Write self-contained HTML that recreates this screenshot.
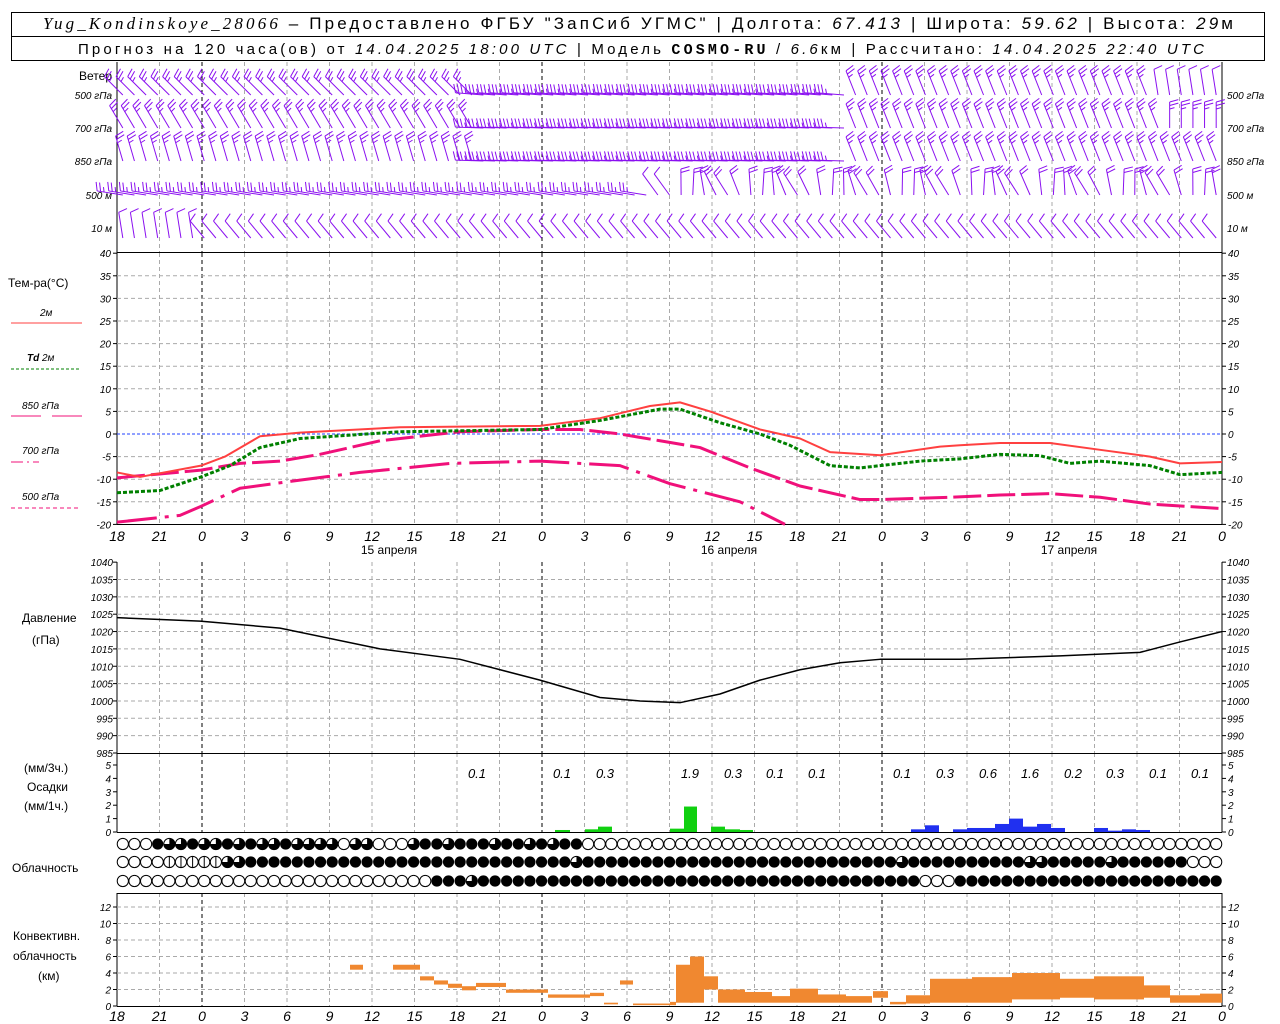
<!DOCTYPE html>
<html><head><meta charset="utf-8"><style>
html,body{margin:0;padding:0;background:#fff;width:1280px;height:1024px;overflow:hidden}
svg{display:block}
text{font-family:"Liberation Sans",sans-serif}
.t{font-size:10px;font-style:italic}
.b{font-size:14px;font-style:italic}
.p{font-size:13px;font-style:italic}
.l{font-size:12px}
</style></head><body>
<svg id="s" width="1280" height="1024" xmlns="http://www.w3.org/2000/svg">
<rect x="11.5" y="12.5" width="1253" height="48" fill="none" stroke="#000"/>
<line x1="11" y1="36.5" x2="1265" y2="36.5" stroke="#000"/>
<text x="638" y="29" font-size="17" text-anchor="middle" textLength="1190"><tspan font-family="Liberation Serif" font-style="italic">Yug_Kondinskoye_28066</tspan> – Предоставлено ФГБУ "ЗапСиб УГМС" | Долгота: <tspan font-style="italic">67.413</tspan> | Широта: <tspan font-style="italic">59.62</tspan> | Высота: <tspan font-style="italic">29</tspan>м</text>
<text x="641" y="54" font-size="15" text-anchor="middle" textLength="1126">Прогноз на 120 часа(ов) от <tspan font-style="italic">14.04.2025 18:00 UTC</tspan> | Модель <tspan font-family="Liberation Mono" font-weight="bold">COSMO-RU</tspan> / <tspan font-style="italic">6.6</tspan>км | Рассчитано: <tspan font-style="italic">14.04.2025 22:40 UTC</tspan></text>
<g id="g"></g>
</svg>
<script>
var g=document.getElementById('g'),h='';
function L(x1,y1,x2,y2,c,w,d){h+='<line x1="'+x1+'" y1="'+y1+'" x2="'+x2+'" y2="'+y2+'" stroke="'+(c||'#000')+'" stroke-width="'+(w||1)+'"'+(d?' stroke-dasharray="'+d+'"':'')+'/>';}
function T(x,y,s,cl,a){h+='<text x="'+x+'" y="'+y+'" class="'+(cl||'l')+'"'+(a?' text-anchor="'+a+'"':'')+'>'+s+'</text>';}
var X0=117,X1=1222,dx=(X1-X0)/26;
function vgrid(y1,y2){for(var i=0;i<=26;i++){var x=X0+i*dx;var day=(i%8==2);if(i==0||i==26)continue;L(x,y1,x,y2,day?'#000':'#aaa',1,'4,3');}}
vgrid(62,252);vgrid(253,524);vgrid(562,753);vgrid(753,832);vgrid(893,1006);
L(X0,62,X0,524);L(X1,62,X1,524);L(X0,252.5,X1,252.5);L(X0,524.5,X1,524.5);
L(X0,562,X0,832);L(X1,562,X1,832);L(X0,753.5,X1,753.5);L(X0,832.5,X1,832.5);
L(X0,893,X0,1006);L(X1,893,X1,1006);L(X0,893.5,X1,893.5);L(X0,1006.5,X1,1006.5);
function ty(t){return 434-t*4.52;}
for(var t=-20;t<=40;t+=5){var y=ty(t);if(t>-20&&t<40)L(X0,y,X1,y,t==0?'#2040ff':'#aaa',1,t==0?'3,2':'4,3');L(X0-4,y,X0,y);L(X1,y,X1+4,y);T(X0-6,y+4,t,'t','end');T(X1+6,y+4,t,'t');}
function py(p){return 753-(p-985)*3.47;}
for(var p=985;p<=1040;p+=5){var y=py(p);if(p>985&&p<1040)L(X0,y,X1,y,'#aaa',1,'4,3');L(X0-4,y,X0,y);L(X1,y,X1+4,y);T(X0-4,y+4,p,'t','end');T(X1+5,y+4,p,'t');}
function ry(v){return 832-v*13.4;}
for(var v=0;v<=5;v++){var y=ry(v);L(X0-4,y,X0,y);L(X1,y,X1+4,y);T(X0-6,y+4,v,'t','end');T(X1+6,y+4,v,'t');}
function cy(v){return 1006-v*8.25;}
for(var v=0;v<=12;v+=2){var y=cy(v);if(v>0)L(X0,y,X1,y,'#aaa',1,'4,3');L(X0-4,y,X0,y);L(X1,y,X1+4,y);T(X0-6,y+4,v,'t','end');T(X1+6,y+4,v,'t');}
for(var i=0;i<=26;i++){var x=X0+i*dx;var s=[18,21,0,3,6,9,12,15][i%8];T(x,541,s,'b','middle');T(x,1021,s,'b','middle');}
T(389,554,'15 апреля','l','middle');T(729,554,'16 апреля','l','middle');T(1069,554,'17 апреля','l','middle');
T(112,80,'Ветер','l','end');
var lv=[['500 гПа',95],['700 гПа',128],['850 гПа',161],['500 м',195],['10  м',228]];
lv.forEach(function(a){T(112,a[1]+4,a[0],'t','end');T(1227,a[1]+4,a[0],'t');});
T(8,287,'Тем-ра(°C)');T(40,316,'2м','t');L(11,323,82,323,'#ff4040',1);
T(27,361,'<tspan font-weight="bold">Td</tspan>  2м','t');L(11,369,79,369,'#008000',1,'3,2');
T(22,409,'850 гПа','t');L(11,416,41,416,'#f0107a');L(52,416,82,416,'#f0107a');
T(22,454,'700 гПа','t');L(11,462,39,462,'#f0107a',1,'12,4,2,4');
T(22,500,'500 гПа','t');L(11,508,79,508,'#f0107a',1,'4,3');
T(22,622,'Давление');T(32,644,'(гПа)');
T(24,772,'(мм/3ч.)');T(27,791,'Осадки');T(24,810,'(мм/1ч.)');
T(12,872,'Облачность');T(13,940,'Конвективн.');T(13,960,'облачность');T(38,980,'(км)');
function crv(pts,f,c,w,d){var s='';pts.forEach(function(p,i){s+=(i?'L':'M')+p[0]+','+f(p[1]);});h+='<path d="'+s+'" fill="none" stroke="'+c+'" stroke-width="'+w+'"'+(d?' stroke-dasharray="'+d+'"':'')+' stroke-linejoin="round"/>';}
crv([[117,-19.5],[180,-18],[201,-16],[240,-12],[290,-10.5],[360,-8.5],[450,-6.5],[540,-6],[620,-7],[670,-11],[740,-15],[785,-20]],ty,'#f0107a',3,'40,8,4,8');
crv([[117,-9.7],[201,-8],[240,-6.5],[280,-6],[320,-4.5],[380,-1.5],[460,0.5],[540,1],[580,1],[620,0],[660,-1.5],[700,-3],[750,-7.5],[800,-11.5],[860,-14.5],[880,-14.5],[950,-14],[1000,-13.5],[1050,-13.2],[1100,-14],[1150,-15.5],[1222,-16.5]],ty,'#f0107a',3,'28,6');
crv([[117,-13],[160,-12.5],[201,-9.5],[230,-7],[260,-3],[300,-1],[400,0.5],[540,1],[600,3],[660,5.5],[680,5.5],[720,2.5],[760,0],[790,-2.5],[830,-7],[860,-7.5],[880,-7],[920,-6],[960,-5.5],[1000,-4.5],[1040,-4.8],[1070,-6.5],[1100,-6],[1150,-7],[1180,-9],[1222,-8.5]],ty,'#008000',3,'4,2');
crv([[117,-8.5],[140,-9.5],[201,-7],[225,-5],[260,-0.5],[300,0.3],[400,1.5],[540,1.8],[600,3.5],[650,6.2],[680,7],[710,5],[760,1],[800,-1],[830,-4],[880,-4.7],[940,-2.8],[960,-2.5],[1000,-2],[1050,-2],[1100,-3.5],[1150,-5],[1180,-6.5],[1222,-6.2]],ty,'#ff4040',2);
crv([[117,1024],[200,1023],[280,1021],[380,1015],[460,1012],[540,1006],[600,1001],[640,1000],[680,999.5],[720,1002],[760,1006],[800,1009],[840,1011],[880,1012],[960,1012],[1060,1013],[1140,1014],[1180,1017],[1222,1020]],py,'#000',1.5);
function bar(x1,x2,v,c){h+='<rect x="'+x1+'" y="'+ry(v)+'" width="'+(x2-x1)+'" height="'+(v*13.4)+'" fill="'+c+'"/>';}
[[555,570,.15],[585,598,.2],[598,612,.4],[670,684,.25],[684,697,1.9],[711,725,.4],[725,740,.2],[740,753,.15]].forEach(function(b){bar(b[0],b[1],b[2],'#10d010');});
[[911,925,.2],[925,939,.5],[953,967,.2],[967,981,.3],[981,995,.3],[995,1009,.6],[1009,1023,1.0],[1023,1037,.4],[1037,1051,.6],[1051,1065,.3],[1094,1108,.3],[1108,1122,.1],[1122,1136,.2],[1136,1150,.15]].forEach(function(b){bar(b[0],b[1],b[2],'#2030f0');});
[[477,'0.1'],[562,'0.1'],[605,'0.3'],[690,'1.9'],[733,'0.3'],[775,'0.1'],[817,'0.1'],[902,'0.1'],[945,'0.3'],[988,'0.6'],[1030,'1.6'],[1073,'0.2'],[1115,'0.3'],[1158,'0.1'],[1200,'0.1']].forEach(function(a){T(a[0],778,a[1],'p','middle');});
var rows=[];
rows[0]="000322322323223222202200023323332332323300000000000000000000000000000000000000000000000000000000";
rows[1]="00001111122333333333333333333333333333323333333333333333333333333332333333333322333332333333000";
rows[2]="00000000000000000000000000033323333333333333333333333333333333333333300033333333333333333333333";
var N=95,sp=(X1-X0)/N,ys=[844,862,881];
for(var r=0;r<3;r++)for(var i=0;i<N;i++){var cx=X0+sp*(i+0.5),cyy=ys[r],v=+(rows[r][i]||0),R=5.6;
 if(v==3){h+='<circle cx="'+cx+'" cy="'+cyy+'" r="'+R+'" fill="#000"/>';}
 else{h+='<circle cx="'+cx+'" cy="'+cyy+'" r="'+R+'" fill="#fff" stroke="#000"/>';
  if(v==1)L(cx,cyy-R,cx,cyy+R);
  if(v==2)h+='<path d="M'+cx+','+cyy+'L'+cx+','+(cyy-R)+'A'+R+','+R+' 0 1 1 '+(cx-R)+','+cyy+'Z"/>';}}
function cb(x1,x2,b,t){h+='<rect x="'+x1+'" y="'+cy(t)+'" width="'+(x2-x1)+'" height="'+((t-b)*8.25)+'" fill="#f08830"/>';}
[[350,363,4.4,5],[393,420,4.4,5],[420,434,3.1,3.6],[434,448,2.6,3.1],[448,462,2.2,2.7],[462,476,1.9,2.4],[476,506,2.3,2.8],[506,548,1.6,2],[548,590,1,1.4],[590,604,1.2,1.6],[604,618,0.2,0.4],[620,633,2.6,3.1],[633,670,0.1,0.3],[670,676,0.1,0.5],[676,693,0.4,5],[690,704,0.4,6],[704,718,2,3.6],[718,745,0.4,2],[745,772,0.4,1.7],[772,790,0.4,1.2],[790,818,0.4,2.1],[818,846,0.4,1.4],[846,872,0.4,1.2],[873,888,1,1.8],[890,906,0.2,0.5],[906,930,0.3,1.3],[930,972,0.4,3.3],[972,1012,0.4,3.5],[1012,1060,0.8,4],[1060,1094,1,3.3],[1094,1144,0.8,3.6],[1144,1170,1,2.5],[1170,1200,0.4,1.3],[1200,1222,0.4,1.5]].forEach(function(b){cb(b[0],b[1],b[2],b[3]);});
var C='#8a10f0';
function barb(bx,by,a,n,Ln){var c=Math.cos(a),s=Math.sin(a),tx=bx+Ln*c,ty2=by+Ln*s;L(bx,by,tx,ty2,C);
 var fa=a+1.3,fc=Math.cos(fa),fs=Math.sin(fa);
 for(var k=0;k<n;k++){var px=tx-k*3.5*c,pyy=ty2-k*3.5*s;var fl=(k==n-1&&n>2)?5:9;L(px,pyy,px+fl*fc,pyy+fl*fs,C);}}
var ly=[95,128,161,195,228];
for(var li=0;li<5;li++){for(var i=0;i<N;i++){var bx=X0+sp*(i+0.5),x=bx,a,n,Ln=26;
 if(li<3){ if(x<480){a=-Math.PI*(0.75-li*0.08);n=3;}else if(x<850){a=Math.PI*(1.0+0.05*(li==0?0.5:0.2));n=4;Ln=28;}else{a=-Math.PI*(0.62);n=3;}}
 else if(li==3){ if(x<650){a=Math.PI*1.05;n=3;}else if(x<680){a=-Math.PI*0.7;n=1;}else{a=-Math.PI*(0.58+0.1*Math.sin(i));n=2;}}
 else { if(x<200){a=-Math.PI*0.55;n=1;}else{a=-Math.PI*0.72;n=1;Ln=22;}}
 if(li==0&&x>1150){a=-Math.PI*0.55;n=1;}
 if(li==1&&x>1165){a=-Math.PI*0.5;n=3;}
 if(li<4 && x<X0+4) continue;
 barb(bx,ly[li]+ (li==4?10:0),a,n,Ln);}}
g.innerHTML=h;
</script>
</body></html>
